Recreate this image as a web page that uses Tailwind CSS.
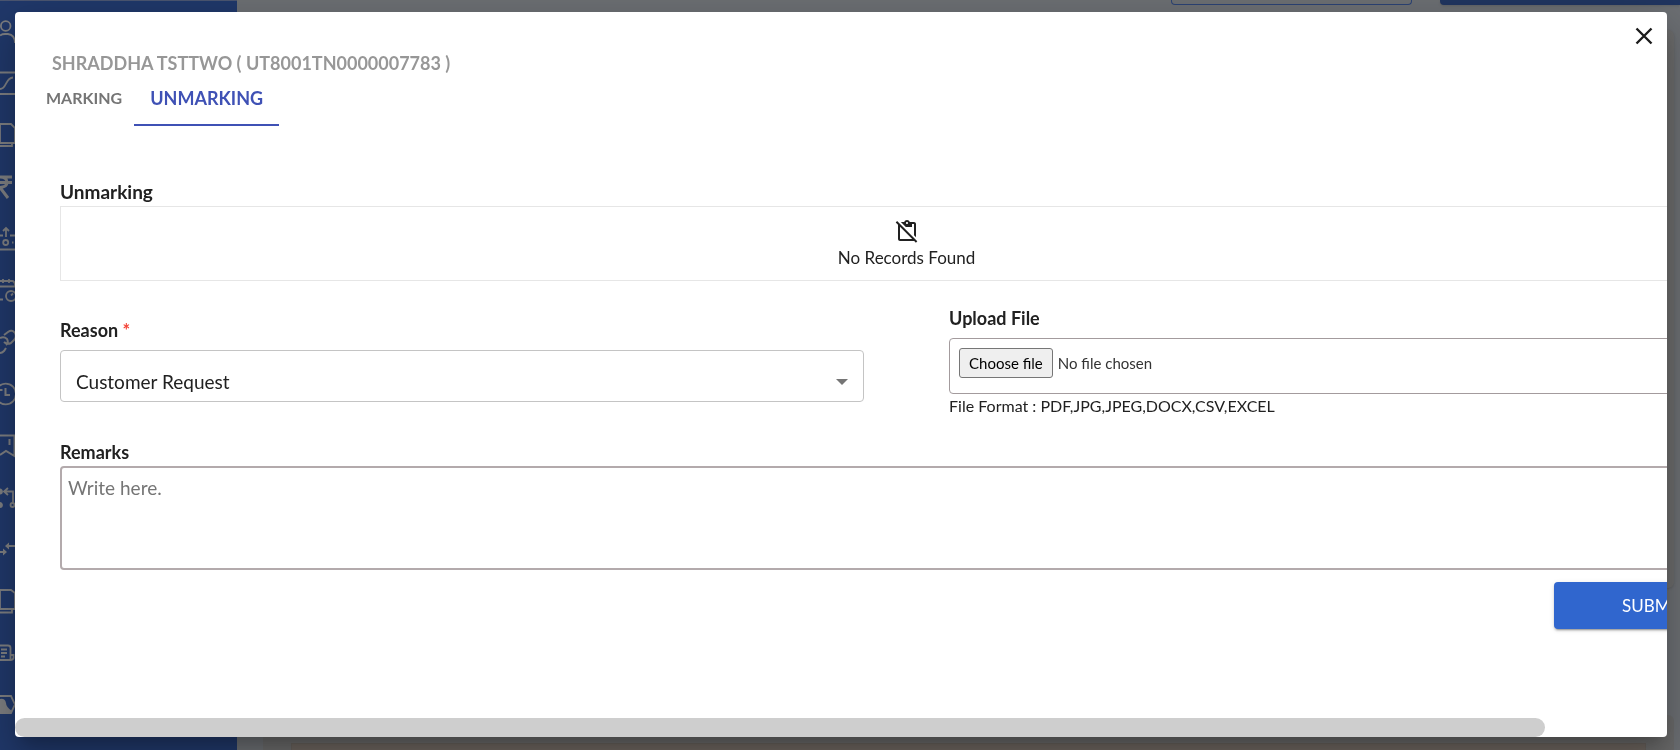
<!DOCTYPE html>
<html lang="en">
<head>
<meta charset="utf-8">
<meta name="viewport" content="width=device-width, initial-scale=1">
<title>Unmarking</title>
<script src="https://cdn.jsdelivr.net/npm/@tailwindcss/browser@4"></script>
</head>
<body class="h-screen overflow-hidden bg-[#6c6f73] font-['Lato',sans-serif] text-[#212121]">

<!-- Dimmed page behind the dialog -->
<div class="flex h-full" aria-hidden="true">
  <aside class="w-[237px] shrink-0 border-t border-[#4b5570] bg-[#20386a] pt-px text-[#7d7e80]">
    <div class="flex flex-col [&>svg]:h-[52px] [&>svg]:w-4 [&>svg]:fill-none [&>svg]:stroke-current [&>svg]:stroke-[1.8]">
      <svg viewBox="0 0 16 52"><circle cx="5.7" cy="24" r="4.8"/><path d="M0 33.5Q2 32 5 32H8Q15 33 15 41"/></svg>
      <svg viewBox="0 0 16 52"><path d="M0 18.5H16M0 40H16M0 35C7 35 5 24 13 23.5"/></svg>
      <svg viewBox="0 0 16 52"><path d="M0 18H11L15 22V37H0V18M0 40H12V37"/></svg>
      <svg viewBox="0 0 16 52"><path stroke-width="3" d="M0 19H12M0 24.5H12M0 19Q7 19 7 24.5Q7 29 0 29.5L8 40"/></svg>
      <svg viewBox="0 0 16 52"><path d="M6 27V18.5M3 21L6 18L9 21M0 25.5H3M10 25.5H16M0 39.5H16"/><circle cx="5.7" cy="32.5" r="2.5"/><path d="M12 32.5H13.5"/></svg>
      <svg viewBox="0 0 16 52"><path d="M0 19H12Q15 19 15 24M0 24.5H16M3 17V21M9 17V21M0 37.5H3M11 33.5L13 31.5"/><circle cx="11" cy="34" r="5"/></svg>
      <svg viewBox="0 0 16 52"><path stroke-width="2" d="M4 21L8 18Q12 15 15 19Q17 23 14 26L11 29Q7 31 4 28M0 24Q4 22 7 25Q9 29 6 31M6 34L4 37Q2 39 0 39"/></svg>
      <svg viewBox="0 0 16 52"><circle cx="5.7" cy="28" r="10.3"/><path stroke-width="2" d="M5.5 22V29H10M0 24H2.5"/></svg>
      <svg viewBox="0 0 16 52"><path stroke-width="2" d="M0 17.5H14.5V38L6 33L0 37M9.5 21V27"/></svg>
      <svg viewBox="0 0 16 52"><path d="M5 21.5H13V33M8 18L4 21.5L8 25"/><circle cx="12.5" cy="35" r="2"/><circle cx="0" cy="21.5" r="2" fill="currentColor"/><circle cx="0" cy="35" r="2" fill="currentColor"/></svg>
      <svg viewBox="0 0 16 52"><path d="M8 24H16M0 30H4"/><path fill="currentColor" stroke="none" d="M5 24L9 20.5V27.5ZM7 30L3 26.5V33.5Z"/></svg>
      <svg viewBox="0 0 16 52"><path d="M0 16H11L15 19V35H0V16M0 38.5H12V35"/></svg>
      <svg viewBox="0 0 16 52"><path d="M0 19.5H8Q10.5 19.5 10.5 22V34H0M10.5 29H13.5V32Q13 34 10.5 34M1 23.5H7M1 27H7M1 30.5H5"/></svg>
      <svg viewBox="0 0 16 52"><path d="M0 18H11L15 26.5L11 35H0"/><path fill="currentColor" stroke="none" d="M0 21Q5 20 6 25Q6 29 12 33L11 35H0Z"/></svg>
    </div>
  </aside>
  <div class="flex min-w-0 grow flex-col pr-1.5 pl-[26px]">
    <div class="-mr-1.5 flex justify-end gap-7">
      <div class="h-[5px] w-[241px] rounded-b border border-t-0 border-[#2c4374]"></div>
      <div class="h-[5px] w-60 rounded-bl bg-[#203560] shadow"></div>
    </div>
    <div class="mt-[25px] h-[558px] rounded-md bg-[#6c6c6c] shadow"></div>
    <div class="mt-[127px] flex grow flex-col rounded-t-md bg-[#6a6a6a] px-7 pt-7">
      <div class="grow border border-b-0 border-[#66605b] bg-[#6c645e]"></div>
    </div>
  </div>
</div>

<!-- Dialog -->
<div class="fixed inset-0 flex pt-3 pr-[13px] pb-[13px] pl-[15px]">
  <div role="dialog" aria-modal="true" aria-labelledby="dialog-title" class="relative flex min-w-0 grow flex-col overflow-hidden rounded bg-white shadow-[0_11px_15px_-7px_rgba(0,0,0,0.2),0_24px_38px_3px_rgba(0,0,0,0.14),0_9px_46px_8px_rgba(0,0,0,0.12)]">
    <button type="button" aria-label="Close" class="absolute top-3 right-[11px] flex size-6 items-center justify-center">
      <svg viewBox="0 0 24 24" class="size-6 fill-none stroke-[#1c1c1c] stroke-[2.4]"><path d="M4.5 4.5L19.5 19.5M19.5 4.5L4.5 19.5"/></svg>
    </button>

    <div class="min-h-0 grow overflow-hidden">
      <div class="w-[108%] pt-[41px] pr-[46px] pl-[45px]">
        <h1 id="dialog-title" class="-ml-2 text-[18px] leading-5 font-bold text-[#979797]">SHRADDHA TSTTWO ( UT8001TN0000007783 )</h1>
        <div role="tablist" class="-ml-7 flex h-[53px]">
          <button role="tab" aria-selected="false" type="button" class="pr-3 pb-[3px] pl-3.5 text-[16px] font-bold text-[#757575]">MARKING</button>
          <button role="tab" aria-selected="true" type="button" class="border-b-2 border-[#3f51b5] px-4 text-[18px] font-bold text-[#3f51b5]">UNMARKING</button>
        </div>

        <h2 class="mt-[54px] text-[19px] leading-6 font-bold">Unmarking</h2>
        <div class="mt-0.5 flex h-[75px] flex-col items-center border border-[#e6e6e6] pt-3">
          <svg viewBox="0 0 24 24" fill-rule="evenodd" class="size-6 fill-[#212121]"><path d="M21 5c0-1.1-.9-2-2-2h-4.180C14.400 1.840 13.300 1 12 1s-2.400.84-2.820 2H5.830l5 5H17V5h2v11.170l2 2V5zM12 3c.55 0 1 .45 1 1s-.45 1-1 1-1-.45-1-1 .45-1 1-1z"/><path d="M2.100 2.100L.7 3.500L3 5.800V20c0 1.100.9 2 2 2h14.200l1.700 1.700 1.400-1.400zM5 20V7.800L17.200 20z"/></svg>
          <p class="mt-[5px] text-[17px] leading-5">No Records Found</p>
        </div>

        <form>
          <div class="mt-[25px] grid grid-cols-2 gap-x-[85px]">
            <div class="pt-3">
              <label for="reason" class="block text-[18px] leading-6 font-bold">Reason <span class="text-[#f44336]">*</span></label>
              <div class="relative mt-2">
                <select id="reason" class="block h-[52px] w-full appearance-none rounded border border-[#c4c4c4] bg-white px-[15px] pt-3 text-[19px]">
                  <option>Customer Request</option>
                </select>
                <svg viewBox="0 0 12 6" class="pointer-events-none absolute top-[29px] right-4 h-1.5 w-3 fill-[#757575]"><path d="M0 0H12L6 6Z"/></svg>
              </div>
            </div>
            <div>
              <p class="text-[18px] leading-6 font-bold">Upload File</p>
              <label for="upload" class="mt-2 flex h-14 w-full items-start rounded border border-[#a39b9d] p-[9px] text-[15px] text-[#333]">
                <input id="upload" type="file" aria-label="Upload File" class="sr-only">
                <span class="flex h-[30px] items-center rounded-[3px] border border-[#767676] bg-[#efefef] px-[9px] text-black">Choose file</span>
                <span class="pl-[5px] leading-[30px]">No file chosen</span>
              </label>
              <p class="mt-0.5 text-[16px] leading-5">File Format : PDF,JPG,JPEG,DOCX,CSV,EXCEL</p>
            </div>
          </div>

          <label for="remarks" class="mt-6 block text-[18px] leading-6 font-bold">Remarks</label>
          <textarea id="remarks" placeholder="Write here." class="mt-0.5 block h-[104px] w-full resize-none rounded border-2 border-[#b3aaac] px-1.5 pt-1.5 text-[19px] leading-7 placeholder:text-[#757575]"></textarea>
          <button type="submit" class="mt-3 ml-auto block h-[47px] w-[199px] rounded bg-[#3066ce] text-[17px] text-white shadow-[0_3px_1px_-2px_rgba(0,0,0,0.2),0_2px_2px_rgba(0,0,0,0.14),0_1px_5px_rgba(0,0,0,0.12)]">SUBMIT</button>
        </form>
      </div>
    </div>

    <!-- Horizontal scroll track and thumb -->
    <div class="h-[19px] shrink-0"><div class="h-full w-[92.6%] rounded-full bg-[#cecece]"></div></div>
  </div>
</div>
</body>
</html>
